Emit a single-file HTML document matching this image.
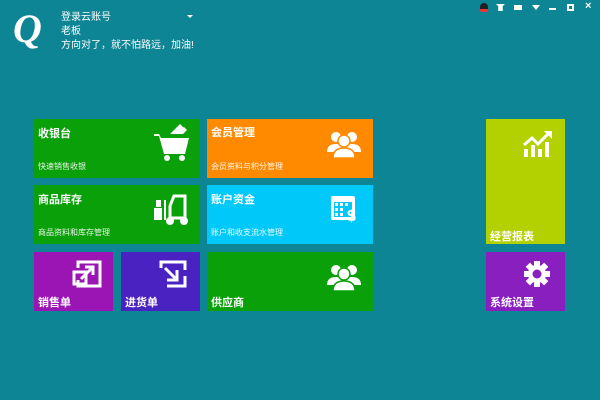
<!DOCTYPE html>
<html><head><meta charset="utf-8"><style>
*{margin:0;padding:0;box-sizing:border-box}
body{width:600px;height:400px;background:#0e8594;position:relative;overflow:hidden;font-family:"Liberation Sans","Noto Sans CJK SC",sans-serif;color:#fff}
.t{position:absolute}
.tl{position:absolute;font-size:11px;font-weight:bold;left:4px}
.sub{position:absolute;font-size:8px;left:4px;opacity:.9}
.hd{position:absolute;left:61px;font-size:10px;line-height:14px}
svg{position:absolute}
.ic{position:absolute;top:4px;font-size:9px;line-height:9px}
</style></head><body>
<div class="t" style="left:13px;top:9px;font-family:'Liberation Serif',serif;font-style:italic;font-weight:bold;font-size:40px;line-height:40px;color:#fff">Q</div>
<div class="hd" style="top:11px">登录云账号</div>
<div class="hd" style="top:25px">老板</div>
<div class="hd" style="top:39px">方向对了，就不怕路远，加油!</div>
<div class="t" style="left:187px;top:15px;width:0;height:0;border-left:3px solid transparent;border-right:3px solid transparent;border-top:3px solid #fff"></div>
<div class="t" style="left:480px;top:3px;width:8px;height:9px;background:#222;border-radius:4px 4px 2px 2px;border-bottom:3px solid #e33"></div>
<div class="t" style="left:496px;top:4px;width:9px;height:7px;background:#fff;clip-path:polygon(0 0,100% 0,75% 30%,75% 100%,25% 100%,25% 30%)"></div>
<div class="t" style="left:514px;top:5px;width:8px;height:5px;background:#fff"></div>
<div class="t" style="left:532px;top:5px;width:0;height:0;border-left:4px solid transparent;border-right:4px solid transparent;border-top:5px solid #fff"></div>
<div class="t" style="left:549px;top:8px;width:7px;height:2px;background:#fff"></div>
<div class="t" style="left:567px;top:4px;width:7px;height:7px;border:2px solid #fff"></div>
<div class="ic" style="left:585px;top:2px;font-size:11px;font-weight:bold">×</div>

<div class="t" style="left:34px;top:119px;width:166px;height:59px;background:#0aa00a">
<div class="tl" style="top:6px">收银台</div><div class="sub" style="top:42px">快速销售收银</div>
<svg style="left:118px;top:3px" width="40" height="40" viewBox="0 0 40 40" fill="#fff"><path d="M2 12h5l2 4h28l-4 16H12L7 14H2z"/><path d="M18 12l10-10 4 4-7 6z M24 12l8-7 3 3-4 4z"/><circle cx="15" cy="36" r="3"/><circle cx="30" cy="36" r="3"/></svg>
</div>
<div class="t" style="left:207px;top:119px;width:166px;height:59px;background:#ff8a00">
<div class="tl" style="top:5px">会员管理</div><div class="sub" style="top:42px">会员资料与积分管理</div>
<svg style="left:120px;top:9px" width="34" height="30" viewBox="0 0 34 30" fill="#fff"><circle cx="9" cy="9" r="5"/><circle cx="25" cy="9" r="5"/><path d="M0 24q0-8 9-8t9 8z M16 24q0-8 9-8t9 8z"/><circle cx="17" cy="13" r="6" stroke="#ff8a00" stroke-width="1.5"/><path d="M6 30q0-10 11-10t11 10z" stroke="#ff8a00" stroke-width="1.5"/></svg>
</div>
<div class="t" style="left:34px;top:185px;width:166px;height:59px;background:#0aa00a">
<div class="tl" style="top:6px">商品库存</div><div class="sub" style="top:42px">商品资料和库存管理</div>
<svg style="left:120px;top:9px" width="36" height="32" viewBox="0 0 36 32" fill="#fff"><rect x="0" y="14" width="8" height="12"/><rect x="2" y="6" width="5" height="7"/><rect x="10" y="6" width="2" height="20"/><path d="M16 24V12l4-10h11v22z" fill="none" stroke="#fff" stroke-width="3"/><circle cx="16" cy="27" r="4"/><circle cx="30" cy="27" r="4"/></svg>
</div>
<div class="t" style="left:207px;top:185px;width:166px;height:59px;background:#00c9f9">
<div class="tl" style="top:6px">账户资金</div><div class="sub" style="top:42px">账户和收支流水管理</div>
<svg style="left:124px;top:7px" width="30" height="32" viewBox="0 0 30 32" fill="#fff"><rect x="0" y="4" width="24" height="24" rx="2"/><g fill="#00c9f9"><rect x="3" y="10" width="18" height="15"/></g><g fill="#fff"><rect x="4" y="11" width="3" height="3"/><rect x="9" y="11" width="3" height="3"/><rect x="14" y="11" width="3" height="3"/><rect x="4" y="16" width="3" height="3"/><rect x="9" y="16" width="3" height="3"/><rect x="4" y="21" width="3" height="3"/><rect x="9" y="21" width="3" height="3"/></g><text x="16" y="29" font-size="16" font-weight="bold" fill="#fff" font-family="Liberation Sans">$</text></svg>
</div>
<div class="t" style="left:34px;top:252px;width:79px;height:59px;background:#9b15b4">
<div class="tl" style="top:42px">销售单</div>
<svg style="left:38px;top:8px" width="30" height="28" viewBox="0 0 30 28" fill="none" stroke="#fff" stroke-width="3"><path d="M6 8V2h22v24H6v-6"/><path d="M2 12h12v12H2z"/><path d="M9 19l12-12M13 7h8v8"/></svg>
</div>
<div class="t" style="left:121px;top:252px;width:79px;height:59px;background:#4b22c2">
<div class="tl" style="top:42px">进货单</div>
<svg style="left:38px;top:8px" width="30" height="28" viewBox="0 0 30 28" fill="none" stroke="#fff" stroke-width="3"><path d="M2 8V2h24v8M26 16v10H8"/><path d="M6 8l12 12M8 20h10V10"/></svg>
</div>
<div class="t" style="left:207px;top:252px;width:166px;height:59px;background:#0aa00a">
<div class="tl" style="top:42px">供应商</div>
<svg style="left:120px;top:9px" width="34" height="30" viewBox="0 0 34 30" fill="#fff"><circle cx="9" cy="9" r="5"/><circle cx="25" cy="9" r="5"/><path d="M0 24q0-8 9-8t9 8z M16 24q0-8 9-8t9 8z"/><circle cx="17" cy="13" r="6" stroke="#0aa00a" stroke-width="1.5"/><path d="M6 30q0-10 11-10t11 10z" stroke="#0aa00a" stroke-width="1.5"/></svg>
</div>
<div class="t" style="left:486px;top:119px;width:79px;height:125px;background:#b3d100">
<div class="tl" style="top:109px">经营报表</div>
<svg style="left:36px;top:10px" width="32" height="28" viewBox="0 0 32 28" fill="#fff"><path d="M2 16l8-7 6 6 10-10" fill="none" stroke="#fff" stroke-width="3"/><path d="M22 2h8v8z"/><rect x="2" y="20" width="4" height="8"/><rect x="9" y="16" width="4" height="12"/><rect x="16" y="20" width="4" height="8"/><rect x="23" y="13" width="4" height="15"/></svg>
</div>
<div class="t" style="left:486px;top:252px;width:79px;height:59px;background:#8a1fc0">
<div class="tl" style="top:42px">系统设置</div>
<svg style="left:38px;top:9px" width="26" height="26" viewBox="0 0 26 26"><g fill="#fff"><circle cx="13" cy="13" r="9"/><rect x="10" y="0" width="6" height="26"/><rect x="10" y="0" width="6" height="26" transform="rotate(45 13 13)"/><rect x="10" y="0" width="6" height="26" transform="rotate(90 13 13)"/><rect x="10" y="0" width="6" height="26" transform="rotate(135 13 13)"/></g><circle cx="13" cy="13" r="4.5" fill="#8a1fc0"/></svg>
</div>
</body></html>
